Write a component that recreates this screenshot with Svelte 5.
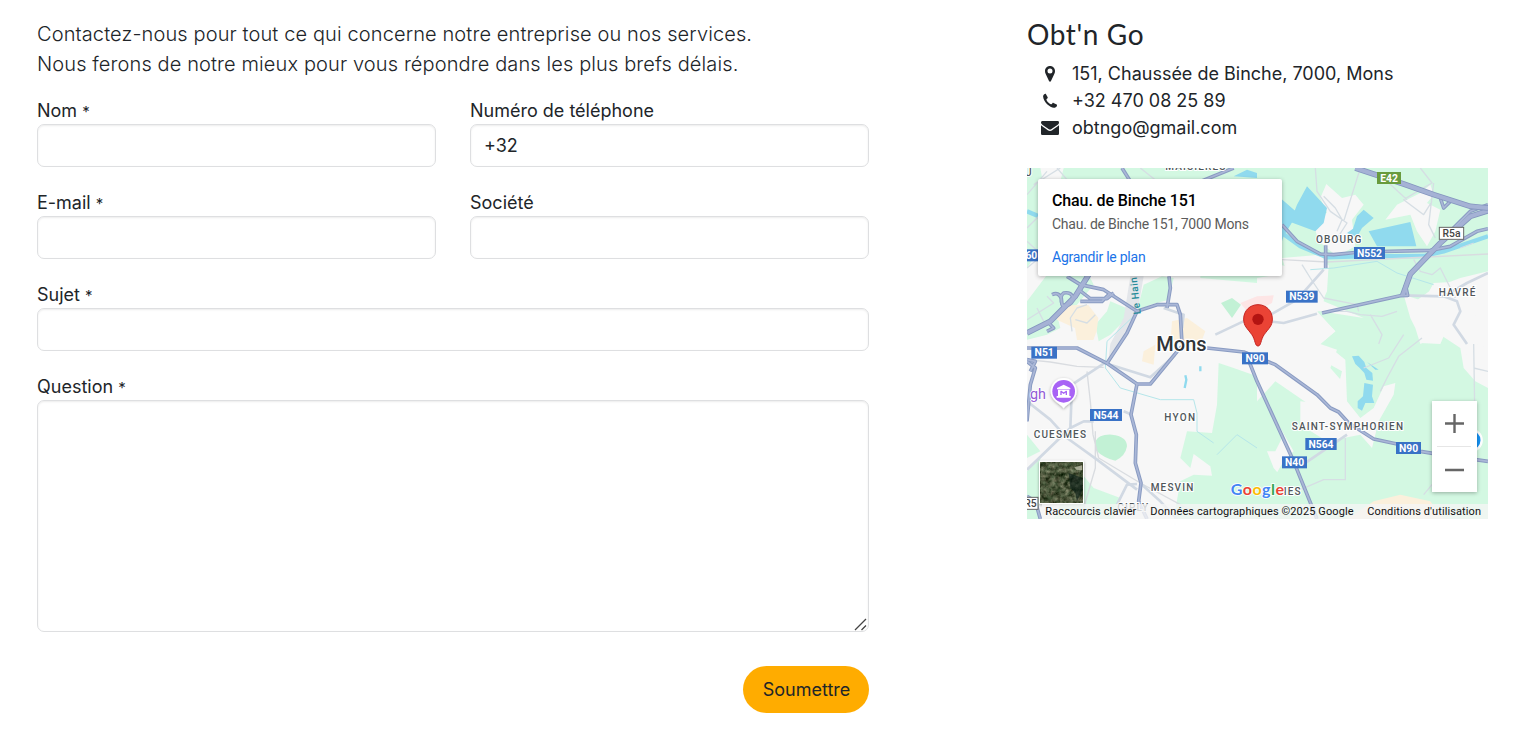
<script>
  // Map geometry uses a 1383 x 1053 canvas, three units per pixel.
  const green = [
    'M0 0H40L60 110L35 130L60 210L0 300Z',
    'M110 0H1383V320L1340 350L1310 340L1220 345L1190 400L1130 380L1150 450L1165 480L1180 528L1240 500L1300 540L1310 600L1345 640L1383 660V1053H880L800 990L740 930L770 880L800 850L760 780L700 740L690 700L745 640L840 705L950 725L945 640L910 600L930 545L880 528L925 490L870 435L900 370L905 290L830 310L760 290V330L690 345L520 330V280L100 260L80 120Z',
    'M0 400L60 320H185L200 350L150 410L90 440L100 480L60 500L0 515Z',
    'M250 400L310 425L290 460L250 500L215 520L205 470L240 430Z',
    'M405 325L440 330L425 395L370 410L330 430L350 350Z',
    'M575 585L620 600L690 625V700L770 800L745 850L720 850L740 900L800 970L850 1053H440L460 940L500 920L555 923L550 895L500 858L490 900L460 870L480 790L555 795L570 710Z',
    'M0 870L40 850L0 800ZM0 910L40 870L35 1053H0ZM150 900L200 960L280 990L260 1053H80Z'
  ];
  const land = [
    'M898 48L945 90L985 80L1010 110L975 155L985 235L930 265L875 220L860 170L850 145L900 135L880 90Z',
    'M1075 155L1110 110L1180 75L1210 50L1220 80L1200 105L1240 125L1225 190L1200 235L1170 190L1150 140Z',
    'M765 270L880 260L905 295L890 400L1010 450L880 430L690 425V330L780 315Z',
    'M1145 415L1220 360L1300 330L1383 310V420L1330 450L1305 510L1265 470L1240 528L1180 525L1190 490Z',
    'M918 545L955 575L960 700L1000 750L1040 720L1070 655L1105 645L1100 680L1055 760L1035 840L1000 800L900 820L820 770L820 700L920 710L945 610L910 590Z',
    'M1315 545L1350 530L1383 540V600L1335 610Z',
    'M690 425L870 430L925 490L880 528L850 570L740 600L690 560Z'
  ];
  const minor = [
    'M0 80L60 10M20 50L100 0M0 180L60 120M0 300L60 250M0 220L60 275M120 35L90 0M340 0L390 40L430 35',
    'M135 490L130 450L150 420L180 410M145 455L180 465L205 440M0 455L80 405L60 385M30 420L50 460',
    'M865 0L870 70L910 130L960 165L925 220M930 190L945 155L925 120L890 85M1000 0L950 160M1180 0L1215 45L1180 65L1130 95L1190 140L1215 100M1220 45L1205 170L1225 210M1080 40L1140 95M1300 240L1340 225M825 290L850 330L890 390L990 410L995 430M895 430L960 430L1000 440L1065 445L1110 430M1030 440L1065 500L1055 528M1160 275L1180 310L1215 320L1240 300L1285 390',
    'M1010 600L1085 570L1130 500M1060 670L1080 630L1115 565L1185 510M1340 528L1345 840M1340 600L1383 610M955 810V935L890 935L820 965M1190 980L1240 920'
  ];
  const streets = [
    'M565 500L660 455M0 700L70 755L120 810L210 875L330 965M130 780L0 905M130 780L135 650L240 580M130 780L170 760H200M290 730L315 740M250 590L370 628L445 560',
    'M410 420L470 440L465 480M330 948L300 950L270 1010M680 455L770 465L870 437M690 463L810 395L890 305',
    'M820 895L960 800M1125 382L1250 385L1320 345L1383 315M1250 385L1290 400L1300 430L1280 470L1320 528M345 950L400 1000L450 1053'
  ];
  const rail = [
    'M0 575L70 582L150 595L230 598M180 610L190 700L198 800L215 870L340 945L540 1053M205 790L205 900L170 1020',
    'M765 275L900 282L1140 270L1383 258'
  ];
  const trunk = ['M0 495L70 460L145 385L185 320', 'M1383 128L1330 145L1240 225L1150 318L1127 382'];
  const major = [
    'M120 325L160 350L230 365L330 430L390 410H450L460 440L465 528',
    'M420 420L430 360L426 325', 'M285 0L310 40', 'M510 45L620 0',
    'M75 380Q95 370 103 392L105 410Q125 420 140 395Q135 370 110 375Q95 385 108 415', 'M155 365L190 392H240L260 375M160 400L225 400L250 375M60 490L80 480L65 465',
    'M330 430L300 495L240 586', 'M0 540H150L240 586L330 648H370L455 545L475 528',
    'M330 648L312 740L328 800L325 885L342 945L335 1000L360 1053',
    'M540 540L650 552L745 590L870 680L910 720L935 732L965 765L1040 813L1110 828L1180 850L1240 860L1383 880',
    'M655 552L690 640L800 880L870 1053',
    'M765 170L810 220L880 258L920 260L1000 252L1210 247L1270 235L1350 190L1383 182',
    'M1383 110L1330 130L1260 200', 'M1240 90L1250 120L1270 100', 'M896 232V300', 'M885 435L1120 383L1142 382L1135 350',
    'M0 760L10 650L25 600L0 580M10 610L25 580L0 575', 'M0 985L25 1000L40 1053'
  ];
  const water = [
    'M735 80L760 90L812 135L770 205L765 220H735ZM840 55L900 120L890 165L865 190L790 162L810 110Z',
    'M1010 125L1040 150L1005 180L990 208L960 195L978 182L990 145ZM1025 190L1150 162L1168 235L1050 235Z',
    'M975 565L995 563L1012 582L1018 600L1036 615L1038 638L1018 635L1012 615L998 600L985 588ZM1012 645L1038 650L1035 685L1042 705L1015 705L1005 728L992 720L992 700L1008 685ZM1020 582L1055 605L1045 605ZM620 25L660 5L690 15V30Z'
  ];
  const badges = [
    { t: 'E42', x: 1050, y: 12, w: 72, k: 'e' }, { t: 'R5a', x: 1237, y: 178, w: 73, k: 'r' },
    { t: 'N552', x: 981, y: 237, w: 93 }, { t: 'N539', x: 777, y: 368, w: 95 },
    { t: 'N51', x: 13, y: 536, w: 77 }, { t: 'N90', x: 645, y: 553, w: 78 },
    { t: 'N544', x: 189, y: 723, w: 96 }, { t: 'N564', x: 835, y: 810, w: 94 },
    { t: 'N90', x: 1107, y: 822, w: 75 }, { t: 'N40', x: 765, y: 865, w: 75 },
    { t: '60', x: -10, y: 244, w: 46 }, { t: 'R5', x: -12, y: 988, w: 45, k: 'r' }
  ];
  const towns = [
    ['OBOURG', 867, 223, 136], ['HAVRÉ', 1235, 381, 110], ['HYON', 412, 757, 92], ['CUESMES', 20, 809, 157],
    ['MESVIN', 371, 966, 128], ['SAINT-SYMPHORIEN', 794, 784, 334], ['IES', 770, 979, 51], ['CIPLY', 271, 1027, 92], ['MAISIERES', 415, 3, 180]
  ];
</script>

<main>
  <section class="contact">
    <p class="lead">Contactez-nous pour tout ce qui concerne notre entreprise ou nos services.<br />Nous ferons de notre mieux pour vous répondre dans les plus brefs délais.</p>
    <form onsubmit={(e) => e.preventDefault()}>
      <label><span>Nom <small>*</small></span><input type="text" /></label>
      <label><span>Numéro de téléphone</span><input type="tel" value="+32" /></label>
      <label><span>E-mail <small>*</small></span><input type="email" /></label>
      <label><span>Société</span><input type="text" /></label>
      <label class="wide"><span>Sujet <small>*</small></span><input type="text" /></label>
      <label class="wide"><span>Question <small>*</small></span><textarea></textarea><svg class="grip" width="13" height="13" viewBox="0 0 13 13"><path d="M1 12L12 1M7.500 12L12 7.500" /></svg></label>
      <button class="submit" type="submit">Soumettre</button>
    </form>
  </section>

  <aside>
    <h1>Obt'n Go</h1>
    <ul>
      <li><svg width="11" height="18" viewBox="0 0 11 18"><path fill-rule="evenodd" d="M5.5 1C8.4 1 10.5 3.2 10.5 6c0 1.1-.2 1.9-.6 2.7L6.5 16c-.4.9-1.6.9-2 0L1.1 8.700C.7 7.900.5 7.100.5 6c0-2.800 2.100-5 5-5Zm0 2.600a2.500 2.500 0 1 0 0 5 2.500 2.500 0 0 0 0-5Z" /></svg>151, Chaussée de Binche, 7000, Mons</li>
      <li><svg width="15" height="18" viewBox="0 0 15 18"><path d="M3.500 2.200 5.200 5.300c.2.400 0 .9-.4 1.200-.6.500-1.100.8-.8 1.400 1 2 2.400 3.300 4.300 4.300.7.400 1-.3 1.600-1 .3-.4.7-.5 1.100-.3l3.200 1.700c.4.200.4.700.2 1.400-.4 1.200-1.800 1.800-3 1.800C7.500 15.800.9 10 .6 4.600.5 3.200 1.400 2.300 2.400 2c.6-.2.9-.2 1.100.2Z" /></svg>+32 470 08 25 89</li>
      <li><svg width="18" height="18" viewBox="0 0 18 18"><path d="M0 3.500C0 2.500.7 2 1.600 2h14.800c.9 0 1.600.5 1.600 1.400 0 1-.7 1.900-1.600 2.500L10.500 10c-1 .7-2 .7-3 0L1.600 5.900C.7 5.200 0 4.400 0 3.500ZM0 6.300c.3.300 5.500 3.900 6.800 4.900 1.400 1 3 1 4.400 0 1.400-1 6.500-4.500 6.800-4.900v8.100c0 .9-.7 1.600-1.600 1.600H1.600C.7 16 0 15.300 0 14.400Z" /></svg>obtngo@gmail.com</li>
    </ul>

    <div class="map">
      <svg class="canvas" viewBox="0 0 1383 1053">
        <defs>
          <filter id="terrain" x="0" y="0" width="100%" height="100%" color-interpolation-filters="sRGB">
            <feTurbulence type="fractalNoise" baseFrequency=".07" numOctaves="4" seed="9" />
            <feColorMatrix values=".5 .35 0 0 -.14  .4 .4 0 0 -.07  .4 .35 0 0 -.15  0 0 0 0 1" />
          </filter>
          <filter id="shade" x="-30%" y="-30%" width="160%" height="160%"><feDropShadow dx="0" dy="3" stdDeviation="5" flood-opacity=".35" /></filter>
        </defs>
        <rect width="1383" height="1053" fill="#f7f7f7" />
        {#each green as d}<path {d} fill="#d3f8e2" />{/each}
        {#each land as d}<path {d} fill="#f7f7f7" />{/each}
        <path d="M205 820Q215 798 255 800Q300 805 300 835Q295 865 265 878Q230 870 205 845ZM582 405L615 390L642 410L615 450Z" fill="#c2f1d5" />
        <path d="M94 430L130 412L184 411L214 450L209 490L199 516H150L144 480L89 455ZM435 460L480 450L535 490L520 528H430ZM350 550L385 530L380 590L345 580Z" fill="#fbf0dc" />
        <path d="M640 405L690 385L740 382L735 405L695 425L660 430Z" fill="#fde5e5" />
        <path d="M310 325H350L330 440L270 540L245 570L250 528L290 450Z" fill="#e3e6ea" />
        <path d="M960 1053L1040 1000L1120 980L1210 1000L1250 1053Z" fill="#fbf0dc" />
        {#each water as d}<path {d} fill="#90daee" />{/each}
        <path d="M765 195L820 235L900 268L1000 265L1190 264L1250 250L1383 205" class="river" />
        <path d="M0 130L60 155" class="river" />
        <path d="M330 435L240 520L235 600L280 660L400 695H500L510 735V790L560 825M570 860L630 800L690 840M850 305L920 300L1050 280L1110 315L1220 350" class="stream" />
        <path d="M475 622L478 635L473 660M520 595V610" class="pond" />
        {#each minor as d}<path {d} class="minor" />{/each}
        {#each rail as d}<path {d} class="rail" />{/each}
        {#each streets as d}<path {d} class="street" />{/each}
        {#each trunk as d}<path {d} class="trunk-edge" />{/each}
        {#each major as d}<path {d} class="casing" />{/each}
        {#each major as d}<path {d} class="major" />{/each}
        {#each trunk as d}<path {d} class="trunk" />{/each}
        <path d="M985 0L1130 48L1220 80L1330 115L1383 120" class="trunk-edge" />
        <path d="M985 0L1130 48L1220 80L1330 115L1383 120" class="trunk" />
        {#each towns as [name, x, y, w]}
          <text {x} y={y + 2} textLength={w} class="town">{name}</text>
        {/each}
        <text x="388" y="549" textLength="151" class="city">Mons</text>
        <text transform="translate(341 438) rotate(-96)" textLength="112" class="stream-name">Le Hain</text>
        <text x="-6" y="25" class="town">U</text>
        {#each badges as b}
          <g class="badge {b.k ?? 'n'}"><rect x={b.x} y={b.y} width={b.w} height="36" /><text x={b.x + b.w / 2} y={b.y + 29} text-anchor="middle">{b.t}</text></g>
        {/each}
        <text x="57" y="693" text-anchor="end" class="museum">gh</text>
        <path d="M110 630C88 630 71 648 71 670C71 698 98 705 110 721C122 705 149 698 149 670C149 648 132 630 110 630Z" fill="#fff" filter="url(#shade)" />
        <circle cx="110" cy="670" r="34" fill="#a863f5" />
        <path d="M90 660L110 650L130 660V664H90ZM93 665H127V684H93ZM89 684H131V689H89Z" fill="#fff" />
        <path d="M102 681V670L110 676L118 670V681" stroke="#a863f5" stroke-width="4" fill="none" />
        <circle cx="1332" cy="817" r="32" fill="#1593f5" stroke="#fff" stroke-width="7" />
        <path d="M693 534C683 534 686 516 674 499C660 480 650 474 650 453C650 428 669 410 693 410C717 410 736 428 736 453C736 474 726 480 712 499C700 516 703 534 693 534Z" fill="#ea4335" stroke="#c5221f" stroke-width="3" />
        <circle cx="693" cy="454" r="17" fill="#b31412" />
        <g filter="url(#shade)"><rect x="36" y="878" width="135" height="130" rx="3" fill="#fff" /></g>
        <rect x="40" y="883" width="127" height="121" filter="url(#terrain)" />
        <path d="M125 915L167 930V965L150 1000L145 975L130 960Z" fill="#081b15" opacity=".6" /><path d="M142 898L165 892V907L148 905Z" fill="#bbbda9" opacity=".8" />
        <rect x="45" y="1008" width="1338" height="45" fill="#f5f5f5" opacity=".8" />
        <text x="611" y="982" textLength="160" class="google"><tspan fill="#4285f4">G</tspan><tspan fill="#ea4335">o</tspan><tspan fill="#fbbc04">o</tspan><tspan fill="#4285f4">g</tspan><tspan fill="#34a853">l</tspan><tspan fill="#ea4335">e</tspan></text>
        <g class="legal"><text x="55" y="1041" textLength="273">Raccourcis clavier</text><text x="370" y="1041" textLength="610">Données cartographiques ©2025 Google</text><text x="1021" y="1041" textLength="341">Conditions d'utilisation</text></g>
      </svg>
      <div class="place"><strong>Chau. de Binche 151</strong><span>Chau. de Binche 151, 7000 Mons</span><a href="#plan">Agrandir le plan</a></div>
      <div class="zoom">
        <svg width="45" height="91" viewBox="0 0 45 91"><path d="M13 22.500H32M22.500 13V32M13 69H32" stroke="#666" stroke-width="2.400" /><path d="M5 45.500H39" stroke="#e6e6e6" /></svg>
      </div>
    </div>
  </aside>
</main>

<style>
  :global(body) { margin: 0; background: #fff; }
  main { display: flex; justify-content: space-between; box-sizing: border-box; width: 1530px; height: 737px; padding: 19px 42px 0 37px; overflow: hidden; color: #212529; font: 400 18px/27px Inter, sans-serif; }
  .contact { width: 832px; }
  .lead { margin: 0 0 18px; font-size: 20px; font-weight: 300; line-height: 30px; letter-spacing: .115px; white-space: nowrap; }
  form { display: grid; grid-template-columns: 1fr 1fr; column-gap: 34px; row-gap: 22px; }
  label { position: relative; display: flex; flex-direction: column; }
  label span { height: 27px; }
  small { font-size: 15px; line-height: 1; }
  .wide { grid-column: 1 / -1; }
  input, textarea { box-sizing: border-box; width: 100%; margin: 0; border: 1px solid #dedfe1; border-radius: 7px; background: #fff; box-shadow: inset 0 1px 2px rgb(0 0 0 / 7.5%); color: #212529; font: inherit; padding: 7px 13px; }
  input { height: 43px; }
  textarea { height: 232px; resize: none; }
  .grip { position: absolute; right: 2px; bottom: 1px; fill: none; stroke: #444; stroke-width: 1.3; }
  .submit { grid-column: 2; justify-self: end; width: 126px; height: 47px; margin-top: 12px; padding: 0 0 0 1px; border: 0; border-radius: 24px; background: #ffac00; color: #212529; font: inherit; }
  aside { width: 461px; }
  h1 { margin: -2px 0 9px; font: 400 28px/34px Lato, sans-serif; letter-spacing: .6px; }
  ul { margin: 0; padding: 0; list-style: none; }
  li { display: flex; align-items: center; }
  li svg { width: 46px; flex: none; margin: 0 -.5px; fill: #212529; }
  .map { position: relative; width: 461px; height: 351px; margin-top: 27px; overflow: hidden; font-family: Roboto, sans-serif; }
  .canvas { display: block; width: 461px; height: 351px; }
  .canvas path { stroke-linejoin: round; }
  .river, .stream, .pond, .minor, .street, .rail, .casing, .major, .trunk, .trunk-edge { fill: none; }
  .river { stroke: #90daee; stroke-width: 13; }
  .stream { stroke: #b5e6ea; stroke-width: 3; }
  .pond { stroke: #90daee; stroke-width: 7; }
  .minor { stroke: #d6dee4; stroke-width: 4; }
  .street { stroke: #d1d9e3; stroke-width: 8; }
  .rail { stroke: #d9dce0; stroke-width: 4; }
  .casing { stroke: #899bc2; stroke-width: 11; }
  .major { stroke: #aab7d7; stroke-width: 5; }
  .trunk-edge { stroke: #8495bf; stroke-width: 17; }
  .trunk { stroke: #a5b2d5; stroke-width: 12; }
  .town { fill: #50565a; stroke: #fff; stroke-width: 6; paint-order: stroke; font-size: 30px; font-weight: 500; }
  .city { fill: #303438; stroke: #fff; stroke-width: 8; paint-order: stroke; font-size: 60px; font-weight: 500; }
  .stream-name { fill: #268b99; font-size: 30px; font-weight: 500; }
  .badge rect { fill: #3972c6; }
  .badge text { fill: #fff; font-size: 31px; font-weight: 700; }
  .badge.e rect { fill: #689b3d; }
  .badge.r rect { fill: #fff; stroke: #666; stroke-width: 3; }
  .badge.r text { fill: #444; font-weight: 500; }
  .museum { fill: #9259d6; stroke: #fff; stroke-width: 5; paint-order: stroke; font-size: 43px; }
  .google { font: 700 48px Lato, sans-serif; stroke: #fff; stroke-width: 5; paint-order: stroke; }
  .legal { fill: #111; font-size: 33px; }
  .place { position: absolute; left: 11px; top: 11px; display: flex; flex-direction: column; box-sizing: border-box; width: 244px; height: 97px; padding: 10px 14px; border-radius: 2px; background: #fff; box-shadow: 0 1px 4px rgb(0 0 0 / 30%); font-size: 14px; line-height: 24px; letter-spacing: -.24px; white-space: nowrap; }
  .place strong { color: #000; font-size: 16px; font-weight: 500; letter-spacing: -.12px; }
  .place span { margin-top: -1px; color: #5b5b5b; }
  .place a { margin-top: 9px; color: #1a73e8; text-decoration: none; }
  .zoom { position: absolute; right: 11px; top: 233px; width: 45px; height: 91px; background: #fff; box-shadow: 0 1px 4px rgb(0 0 0 / 30%); }
</style>
